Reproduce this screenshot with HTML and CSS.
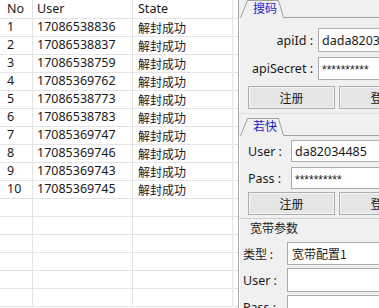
FILE: index.html
```html
<!DOCTYPE html>
<html>
<head>
<meta charset="utf-8">
<link rel="stylesheet" href="styles.css">
</head>
<body>
<div class="app">
  <div class="grid">
    <div class="row head"><div class="c no">No</div><div class="c user">User</div><div class="c st">State</div><div class="c pad"></div></div>
    <div class="row"><div class="c no">1</div><div class="c user">17086538836</div><div class="c st cjk">解封成功</div><div class="c pad"></div></div>
    <div class="row"><div class="c no">2</div><div class="c user">17086538837</div><div class="c st cjk">解封成功</div><div class="c pad"></div></div>
    <div class="row"><div class="c no">3</div><div class="c user">17086538759</div><div class="c st cjk">解封成功</div><div class="c pad"></div></div>
    <div class="row"><div class="c no">4</div><div class="c user">17085369762</div><div class="c st cjk">解封成功</div><div class="c pad"></div></div>
    <div class="row"><div class="c no">5</div><div class="c user">17086538773</div><div class="c st cjk">解封成功</div><div class="c pad"></div></div>
    <div class="row"><div class="c no">6</div><div class="c user">17086538783</div><div class="c st cjk">解封成功</div><div class="c pad"></div></div>
    <div class="row"><div class="c no">7</div><div class="c user">17085369747</div><div class="c st cjk">解封成功</div><div class="c pad"></div></div>
    <div class="row"><div class="c no">8</div><div class="c user">17085369746</div><div class="c st cjk">解封成功</div><div class="c pad"></div></div>
    <div class="row"><div class="c no">9</div><div class="c user">17085369743</div><div class="c st cjk">解封成功</div><div class="c pad"></div></div>
    <div class="row"><div class="c no">10</div><div class="c user">17085369745</div><div class="c st cjk">解封成功</div><div class="c pad"></div></div>
    <div class="row"><div class="c no"></div><div class="c user"></div><div class="c st"></div><div class="c pad"></div></div>
    <div class="row"><div class="c no"></div><div class="c user"></div><div class="c st"></div><div class="c pad"></div></div>
    <div class="row"><div class="c no"></div><div class="c user"></div><div class="c st"></div><div class="c pad"></div></div>
    <div class="row"><div class="c no"></div><div class="c user"></div><div class="c st"></div><div class="c pad"></div></div>
    <div class="row"><div class="c no"></div><div class="c user"></div><div class="c st"></div><div class="c pad"></div></div>
    <div class="row"><div class="c no"></div><div class="c user"></div><div class="c st"></div><div class="c pad"></div></div>
  </div>
  <div class="side">
    <div class="tabctl t1">
      <div class="strip">
        <div class="tab"><svg class="tabshape" width="44" height="18" viewBox="0 0 44 18"><path d="M0.5 18 L7.5 0.5 L38.5 0.5 L43.5 17.5" fill="#f0f0f0" stroke="#a0a0a0"/></svg><span class="tabtext">搜码</span></div>
        <div class="stripline"></div>
      </div>
      <div class="body b1">
        <div class="frow r-apiid"><span class="lbl l1">apiId :</span><div class="inp">dada8203463</div></div>
        <div class="frow r-secret"><span class="lbl l1">apiSecret :</span><div class="inp pw">**********</div></div>
        <div class="btns"><div class="btn">注册</div><div class="btn">登录</div></div>
      </div>
    </div>
    <div class="tabctl t2">
      <div class="strip">
        <div class="tab"><svg class="tabshape" width="44" height="18" viewBox="0 0 44 18"><path d="M0.5 18 L7.5 0.5 L38.5 0.5 L43.5 17.5" fill="#f0f0f0" stroke="#a0a0a0"/></svg><span class="tabtext">若快</span></div>
        <div class="stripline"></div>
      </div>
      <div class="body b2">
        <div class="frow r-user"><span class="lbl l2">User :</span><div class="inp">da82034485</div></div>
        <div class="frow r-pass"><span class="lbl l2">Pass :</span><div class="inp pw">**********</div></div>
        <div class="btns"><div class="btn">注册</div><div class="btn">登录</div></div>
      </div>
    </div>
    <div class="group">
      <div class="gtitle">宽带参数</div>
      <div class="frow r-type"><span class="lbl l3 cjklbl">类型 :</span><div class="inp">宽带配置1</div></div>
      <div class="frow r-guser"><span class="lbl l3">User :</span><div class="inp"></div></div>
      <div class="frow r-gpass"><span class="lbl l3">Pass :</span><div class="inp"></div></div>
    </div>
  </div>
</div>
</body>
</html>
```
FILE: styles.css
```css
html, body {
  margin: 0;
  padding: 0;
  background: #ffffff;
  overflow: hidden;
}
body {
  font-family: "Noto Sans", "Noto Sans CJK SC", sans-serif;
  font-size: 12.5px;
  color: #1a1a1a;
}
.app {
  display: flex;
  width: 379px;
  height: 308px;
  overflow: hidden;
}
.grid {
  width: 238px;
  flex: none;
  background: #fff;
}
.row {
  display: flex;
  height: 18px;
  border-bottom: 1px solid #e4e4e4;
  box-sizing: border-box;
}
.row.head {
  height: 19px;
}
.c {
  box-sizing: border-box;
  border-right: 1px solid #e4e4e4;
  display: flex;
  align-items: center;
  white-space: nowrap;
  line-height: 1;
}
.no { width: 33px; padding-left: 7px; }
.user { width: 100px; padding-left: 4px; }
.st { width: 100px; padding-left: 5px; }
.pad { width: 5px; border-right: none; }
.cjk {
  font-family: "Noto Sans CJK SC", sans-serif;
  font-size: 12px;
}
.side {
  flex: none;
  width: 141px;
  background: #f0f0f0;
  border-left: 1px solid #a8a8a8;
  box-sizing: border-box;
  overflow: hidden;
  display: flex;
  flex-direction: column;
}
.tabctl {
  width: 170px;
}
.strip {
  display: flex;
  height: 18px;
  align-items: stretch;
}
.tab {
  position: relative;
  width: 44px;
  height: 18px;
  flex: none;
  margin-left: 1px;
}
.tabshape {
  position: absolute;
  left: 0;
  top: 0;
}
.tabtext {
  position: relative;
  display: block;
  font-family: "Noto Sans CJK SC", sans-serif;
  font-size: 12px;
  color: #1c1cd0;
  line-height: 16px;
  padding-left: 13px;
}
.stripline {
  flex: 1;
  border-bottom: 1px solid #a0a0a0;
}
.body {
  border-left: 1px solid #ffffff;
  box-sizing: border-box;
}
.b1 {
  padding-top: 10px;
  height: 96px;
  border-bottom: 1px solid #e0e0e0;
}
.t2 {
  margin-top: 4px;
}
.b2 {
  padding-top: 4px;
}
.frow {
  display: flex;
  align-items: center;
}
.lbl {
  flex: none;
  white-space: nowrap;
}
.l1 {
  width: 73px;
  text-align: right;
  padding-right: 0;
  margin-right: 5px;
  box-sizing: border-box;
}
.l2 {
  width: 51px;
  padding-left: 8px;
  box-sizing: border-box;
}
.l3 {
  width: 47px;
  padding-left: 3px;
  box-sizing: border-box;
}
.cjklbl {
  font-family: "Noto Sans CJK SC", sans-serif;
  font-size: 12px;
}
.inp {
  flex: none;
  width: 100px;
  height: 24px;
  box-sizing: border-box;
  background: #fff;
  border: 1px solid #acacac;
  padding-left: 3px;
  display: flex;
  align-items: center;
  white-space: nowrap;
  overflow: hidden;
  font-size: 12.5px;
}
.pw {
  font-family: "Liberation Sans", sans-serif;
  font-size: 12px;
  padding-top: 3px;
}
.r-secret { margin-top: 5px; }
.r-secret .inp { height: 23px; }
.r-user .inp, .r-pass .inp { height: 22px; }
.r-pass { margin-top: 5px; }
.btns {
  display: flex;
  gap: 4px;
  margin-top: 6px;
  padding-left: 8px;
}
.b2 .btns {
  margin-top: 3px;
}
.btn {
  flex: none;
  width: 87px;
  height: 23px;
  box-sizing: border-box;
  border: 1px solid #adadad;
  background: #e5e5e5;
  box-shadow: inset 0 0 0 1px #f4f4f4;
  display: flex;
  align-items: center;
  justify-content: center;
  font-family: "Noto Sans CJK SC", sans-serif;
  font-size: 12px;
}
.group {
  flex: 1;
  border-top: 1px solid #d0d0d0;
  border-left: 1px solid #ffffff;
  margin-top: 3px;
  width: 170px;
}
.gtitle {
  font-family: "Noto Sans CJK SC", sans-serif;
  font-size: 12px;
  padding-left: 10px;
  height: 18px;
  line-height: 18px;
}
.r-type { margin-top: 5px; }
.r-type .inp { height: 23px; font-family: "Noto Sans CJK SC", sans-serif; font-size: 12px; padding-left: 4px; }
.r-guser { margin-top: 3px; }
.r-gpass { margin-top: 3px; }
```
